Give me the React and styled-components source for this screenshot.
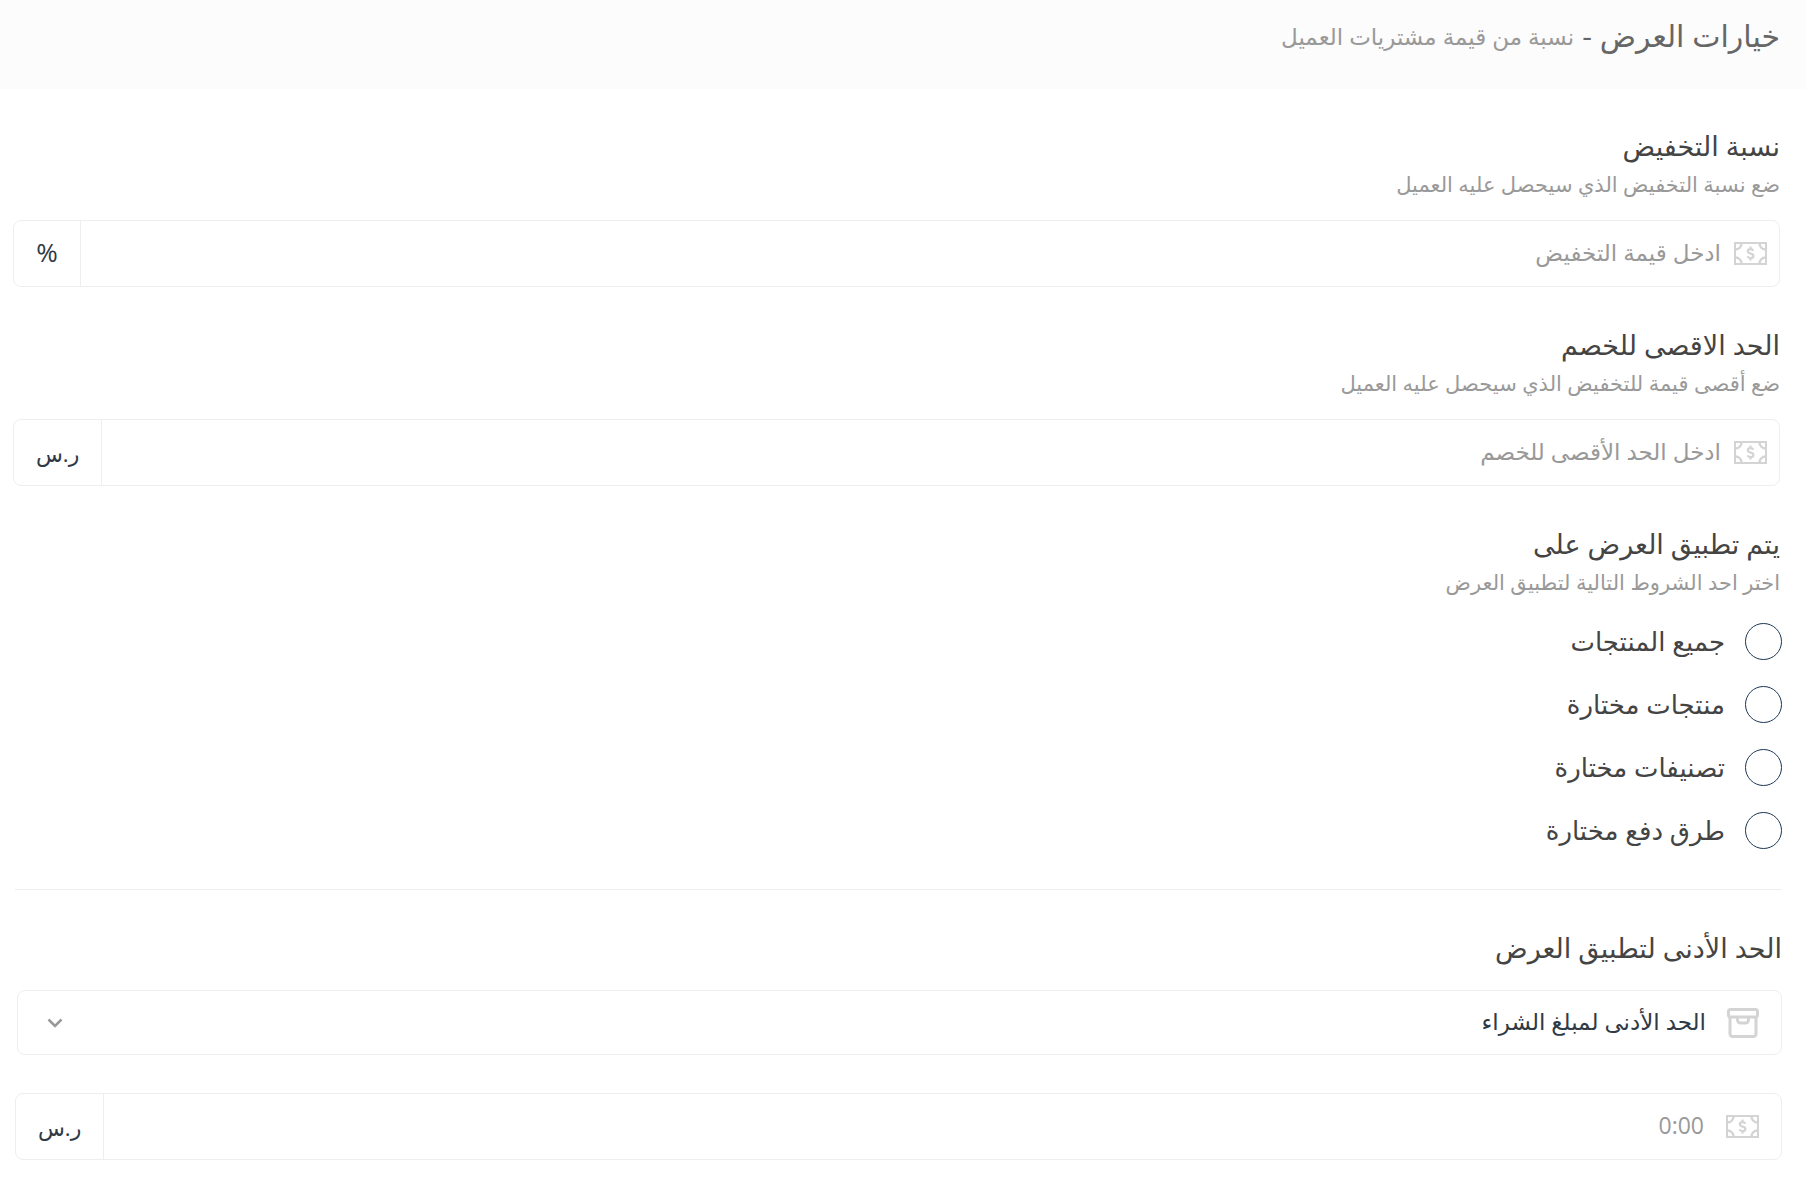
import React, { useState } from "react";
import styled, { createGlobalStyle } from "styled-components";

const GlobalStyle = createGlobalStyle`
  * {
    box-sizing: border-box;
  }
  body {
    margin: 0;
    background: #fff;
    color: #444;
    font-family: "Open Sans", "DejaVu Sans", sans-serif;
  }
  input,
  select {
    font-family: inherit;
  }
`;

const Header = styled.header`
  display: flex;
  align-items: center;
  gap: 8px;
  padding: 16px 26px 33px;
  background: #fcfcfc;
`;

const HeaderTitle = styled.h1`
  margin: 0;
  font-size: 30px;
  font-weight: 400;
  line-height: 40px;
  color: #666;
`;

const HeaderNote = styled.span`
  font-size: 23px;
  line-height: 40px;
  color: #999;
`;

const Section = styled.section`
  display: flex;
  flex-direction: column;
  gap: 38px;
  padding: 37px 26px 0 13px;
`;

const MinimumSection = styled.section`
  margin: 40px 24px 0 15px;
  padding: 38px 0 24px;
  border-top: 1px solid #eee;
`;

const Title = styled.h2`
  margin: 0;
  font-size: 27px;
  font-weight: 400;
  line-height: 40px;
  color: #444;
`;

const Description = styled.p`
  margin: 0;
  font-size: 21px;
  line-height: 36px;
  color: #999;
`;

const Box = styled.div`
  display: flex;
  align-items: center;
  height: 67px;
  margin-top: ${(props) => props.$top}px;
  padding-right: ${(props) => (props.$wide ? 22 : 12)}px;
  border: 1px solid #eee;
  border-radius: 8px;
`;

const SelectBox = styled(Box)`
  height: 65px;
  margin-left: 2px;
  padding-left: 29px;
`;

const Input = styled.input`
  flex: 1;
  min-width: 0;
  height: 100%;
  padding: 0 ${(props) => (props.$wide ? 22 : 13)}px 3px 14px;
  border: none;
  outline: none;
  background: transparent;
  font-size: 23px;
  color: #444;
  &::placeholder {
    color: #999;
    opacity: 1;
  }
`;

const Select = styled.select`
  flex: 1;
  min-width: 0;
  height: 100%;
  padding: 0 21px 3px 14px;
  appearance: none;
  border: none;
  outline: none;
  background: transparent;
  font-size: 23px;
  color: #2f3a45;
`;

// وحدة القياس في طرف الحقل
const Unit = styled.span`
  display: flex;
  align-items: center;
  justify-content: center;
  min-width: 67px;
  height: 100%;
  padding: 0 22px ${(props) => (props.$symbol ? 3 : 0)}px;
  border-right: 1px solid #eee;
  font-size: ${(props) => (props.$symbol ? 26 : 22)}px;
  color: #2f3a45;
`;

const Options = styled.div`
  display: flex;
  flex-direction: column;
  gap: 26px;
  margin: 23px -2px 0 0;
`;

const Option = styled.label`
  display: flex;
  align-items: center;
  gap: 20px;
  font-size: 26px;
  line-height: 37px;
  cursor: pointer;
`;

const Radio = styled.input`
  width: 37px;
  height: 37px;
  margin: 0;
  appearance: none;
  border: 1px solid #1c3754;
  border-radius: 50%;
  cursor: pointer;
  &:checked {
    border-width: 10px;
  }
`;

const Icon = styled.svg`
  flex: none;
  display: block;
`;

const CashIcon = () => (
  <Icon width="33" height="23" viewBox="0 0 33 23" fill="none" stroke="#d4d4d4" strokeWidth="2" aria-hidden="true">
    <rect x="1" y="1" width="31" height="21" />
    <path
      d="M7.5 1.5a6 6 0 0 1-6 6M25.5 1.5a6 6 0 0 0 6 6M7.5 21.5a6 6 0 0 0-6-6M25.5 21.5a6 6 0 0 1 6-6"
      strokeWidth="2.4"
    />
    <path
      d="M19.3 8.7c-.5-1-1.5-1.5-2.8-1.5-1.6 0-2.7.8-2.7 2.1 0 3.1 5.6 1.5 5.6 4.6 0 1.3-1.2 2.1-2.9 2.1-1.4 0-2.5-.5-3-1.6M16.5 4.5v2.7M16.5 16v2.5"
      strokeWidth="2.2"
    />
  </Icon>
);

const ArchiveIcon = () => (
  <Icon width="32" height="30" viewBox="0 0 32 30" fill="none" stroke="#d4d4d4" strokeWidth="3" aria-hidden="true">
    <rect x="1.5" y="1.5" width="29" height="7.5" rx="2" />
    <path d="M3 9v17a2.5 2.5 0 0 0 2.5 2.5h21a2.5 2.5 0 0 0 2.5-2.5V9" />
    <path d="M10.5 10v2a3 3 0 0 0 3 3h5a3 3 0 0 0 3-3v-2" />
  </Icon>
);

const ChevronIcon = () => (
  <Icon width="16" height="10" viewBox="0 0 16 10" fill="none" stroke="#999" strokeWidth="2.5" aria-hidden="true">
    <path d="M1.5 1.5 8 8l6.5-6.5" />
  </Icon>
);

const OPTIONS = [
  { value: "all", label: "جميع المنتجات" },
  { value: "products", label: "منتجات مختارة" },
  { value: "categories", label: "تصنيفات مختارة" },
  { value: "payments", label: "طرق دفع مختارة" },
];

const AmountField = ({ id, title, description, placeholder, unit }) => {
  const [value, setValue] = useState("");

  return (
    <div>
      <Title>
        <label htmlFor={id}>{title}</label>
      </Title>
      <Description>{description}</Description>
      <Box $top={18}>
        <CashIcon />
        <Input
          id={id}
          placeholder={placeholder}
          value={value}
          onChange={(e) => setValue(e.target.value)}
        />
        <Unit $symbol={unit === "%"}>{unit}</Unit>
      </Box>
    </div>
  );
};

const App = () => {
  const [applyTo, setApplyTo] = useState("");
  const [minimum, setMinimum] = useState("");

  return (
    <div dir="rtl" lang="ar">
      <GlobalStyle />
      <Header>
        <HeaderTitle>خيارات العرض -</HeaderTitle>
        <HeaderNote>نسبة من قيمة مشتريات العميل</HeaderNote>
      </Header>
      <Section>
        <AmountField
          id="percent"
          title="نسبة التخفيض"
          description="ضع نسبة التخفيض الذي سيحصل عليه العميل"
          placeholder="ادخل قيمة التخفيض"
          unit="%"
        />
        <AmountField
          id="maximum"
          title="الحد الاقصى للخصم"
          description="ضع أقصى قيمة للتخفيض الذي سيحصل عليه العميل"
          placeholder="ادخل الحد الأقصى للخصم"
          unit="ر.س"
        />
        <div>
          <Title id="apply-title">يتم تطبيق العرض على</Title>
          <Description>اختر احد الشروط التالية لتطبيق العرض</Description>
          <Options role="radiogroup" aria-labelledby="apply-title">
            {OPTIONS.map((option) => (
              <Option key={option.value}>
                <Radio
                  type="radio"
                  name="applyTo"
                  value={option.value}
                  checked={applyTo === option.value}
                  onChange={(e) => setApplyTo(e.target.value)}
                />
                {option.label}
              </Option>
            ))}
          </Options>
        </div>
      </Section>
      <MinimumSection>
        <Title id="minimum-title">الحد الأدنى لتطبيق العرض</Title>
        <SelectBox $top={22} $wide>
          <ArchiveIcon />
          <Select aria-labelledby="minimum-title" defaultValue="amount">
            <option value="amount">الحد الأدنى لمبلغ الشراء</option>
          </Select>
          <ChevronIcon />
        </SelectBox>
        <Box $top={38} $wide>
          <CashIcon />
          <Input
            $wide
            aria-labelledby="minimum-title"
            placeholder="0:00"
            value={minimum}
            onChange={(e) => setMinimum(e.target.value)}
          />
          <Unit>ر.س</Unit>
        </Box>
      </MinimumSection>
    </div>
  );
};

export default App;
